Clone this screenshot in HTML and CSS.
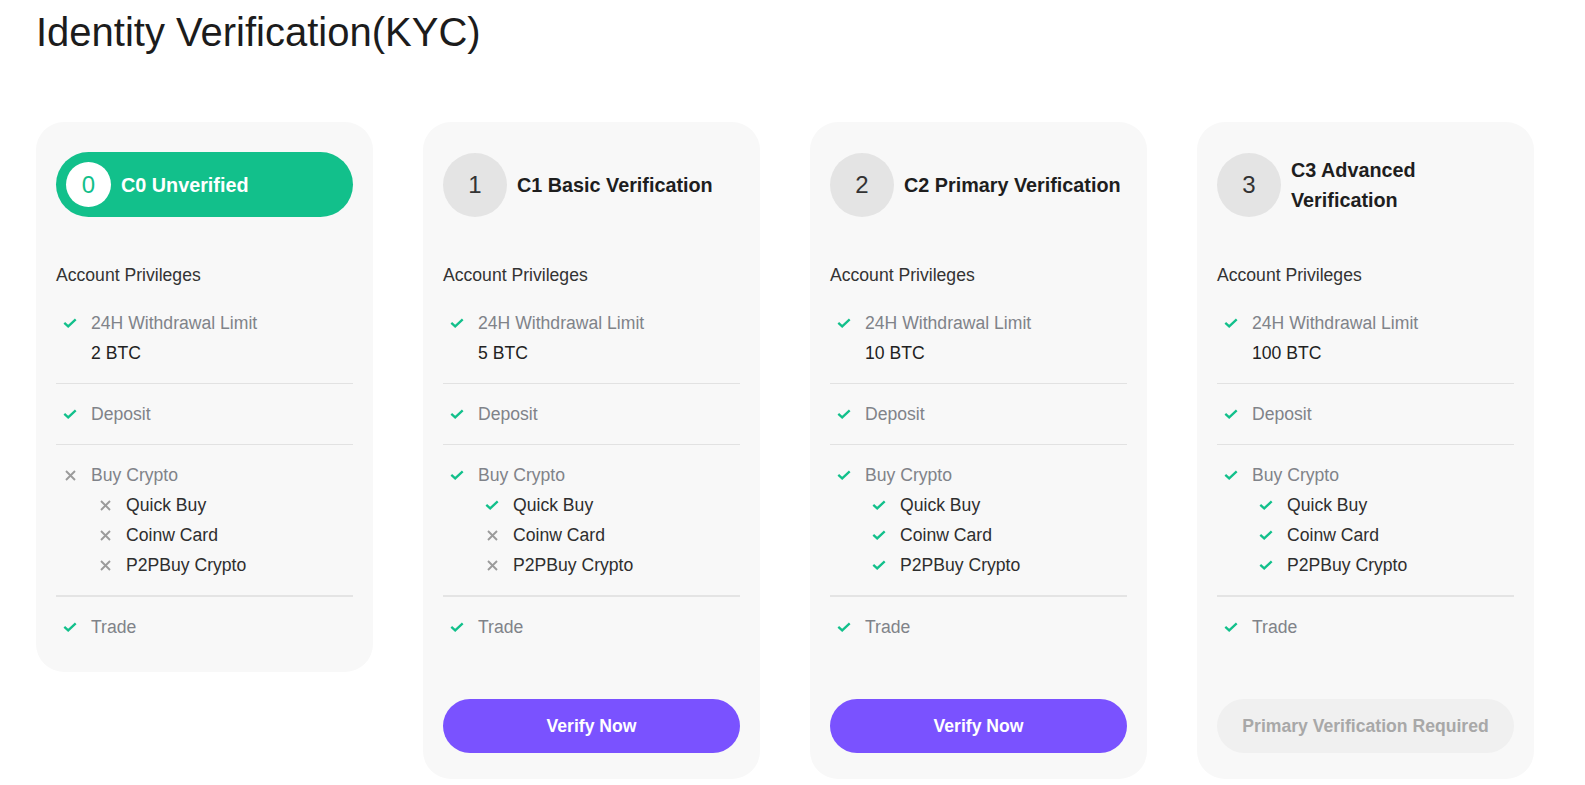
FILE: index.html
```html
<!DOCTYPE html>
<html lang="en">
<head>
<meta charset="utf-8">
<title>Identity Verification(KYC)</title>
<link rel="stylesheet" href="styles.css">
</head>
<body>
<main class="page">
  <h1 class="page-title">Identity Verification(KYC)</h1>
  <div class="levels">

    <section class="card">
      <div class="level level--current">
        <span class="level-num">0</span>
        <span class="level-name">C0 Unverified</span>
      </div>
      <div class="priv-title">Account Privileges</div>
      <div class="priv-list">
        <div class="priv-group">
          <div class="priv"><span class="ic"><svg class="check" viewBox="0 0 14 10" width="14" height="10"><path d="M1.3 4.8 L5.2 8.4 L12.7 1.4"/></svg></span><span class="label">24H Withdrawal Limit</span></div>
          <div class="value">2 BTC</div>
        </div>
        <div class="priv-group">
          <div class="priv"><span class="ic"><svg class="check" viewBox="0 0 14 10" width="14" height="10"><path d="M1.3 4.8 L5.2 8.4 L12.7 1.4"/></svg></span><span class="label">Deposit</span></div>
        </div>
        <div class="priv-group priv-group--subs">
          <div class="priv"><span class="ic"><svg class="cross" viewBox="0 0 11 11" width="11" height="11"><path d="M1 1 L10 10 M10 1 L1 10"/></svg></span><span class="label">Buy Crypto</span></div>
          <div class="priv priv--sub"><span class="ic"><svg class="cross" viewBox="0 0 11 11" width="11" height="11"><path d="M1 1 L10 10 M10 1 L1 10"/></svg></span><span class="sub-label">Quick Buy</span></div>
          <div class="priv priv--sub"><span class="ic"><svg class="cross" viewBox="0 0 11 11" width="11" height="11"><path d="M1 1 L10 10 M10 1 L1 10"/></svg></span><span class="sub-label">Coinw Card</span></div>
          <div class="priv priv--sub"><span class="ic"><svg class="cross" viewBox="0 0 11 11" width="11" height="11"><path d="M1 1 L10 10 M10 1 L1 10"/></svg></span><span class="sub-label">P2PBuy Crypto</span></div>
        </div>
        <div class="priv-group">
          <div class="priv"><span class="ic"><svg class="check" viewBox="0 0 14 10" width="14" height="10"><path d="M1.3 4.8 L5.2 8.4 L12.7 1.4"/></svg></span><span class="label">Trade</span></div>
        </div>
      </div>
    </section>

    <section class="card card--action">
      <div class="level">
        <span class="level-num">1</span>
        <span class="level-name">C1 Basic Verification</span>
      </div>
      <div class="priv-title">Account Privileges</div>
      <div class="priv-list">
        <div class="priv-group">
          <div class="priv"><span class="ic"><svg class="check" viewBox="0 0 14 10" width="14" height="10"><path d="M1.3 4.8 L5.2 8.4 L12.7 1.4"/></svg></span><span class="label">24H Withdrawal Limit</span></div>
          <div class="value">5 BTC</div>
        </div>
        <div class="priv-group">
          <div class="priv"><span class="ic"><svg class="check" viewBox="0 0 14 10" width="14" height="10"><path d="M1.3 4.8 L5.2 8.4 L12.7 1.4"/></svg></span><span class="label">Deposit</span></div>
        </div>
        <div class="priv-group priv-group--subs">
          <div class="priv"><span class="ic"><svg class="check" viewBox="0 0 14 10" width="14" height="10"><path d="M1.3 4.8 L5.2 8.4 L12.7 1.4"/></svg></span><span class="label">Buy Crypto</span></div>
          <div class="priv priv--sub"><span class="ic"><svg class="check" viewBox="0 0 14 10" width="14" height="10"><path d="M1.3 4.8 L5.2 8.4 L12.7 1.4"/></svg></span><span class="sub-label">Quick Buy</span></div>
          <div class="priv priv--sub"><span class="ic"><svg class="cross" viewBox="0 0 11 11" width="11" height="11"><path d="M1 1 L10 10 M10 1 L1 10"/></svg></span><span class="sub-label">Coinw Card</span></div>
          <div class="priv priv--sub"><span class="ic"><svg class="cross" viewBox="0 0 11 11" width="11" height="11"><path d="M1 1 L10 10 M10 1 L1 10"/></svg></span><span class="sub-label">P2PBuy Crypto</span></div>
        </div>
        <div class="priv-group">
          <div class="priv"><span class="ic"><svg class="check" viewBox="0 0 14 10" width="14" height="10"><path d="M1.3 4.8 L5.2 8.4 L12.7 1.4"/></svg></span><span class="label">Trade</span></div>
        </div>
      </div>
      <button class="btn btn--primary" type="button">Verify Now</button>
    </section>

    <section class="card card--action">
      <div class="level">
        <span class="level-num">2</span>
        <span class="level-name">C2 Primary Verification</span>
      </div>
      <div class="priv-title">Account Privileges</div>
      <div class="priv-list">
        <div class="priv-group">
          <div class="priv"><span class="ic"><svg class="check" viewBox="0 0 14 10" width="14" height="10"><path d="M1.3 4.8 L5.2 8.4 L12.7 1.4"/></svg></span><span class="label">24H Withdrawal Limit</span></div>
          <div class="value">10 BTC</div>
        </div>
        <div class="priv-group">
          <div class="priv"><span class="ic"><svg class="check" viewBox="0 0 14 10" width="14" height="10"><path d="M1.3 4.8 L5.2 8.4 L12.7 1.4"/></svg></span><span class="label">Deposit</span></div>
        </div>
        <div class="priv-group priv-group--subs">
          <div class="priv"><span class="ic"><svg class="check" viewBox="0 0 14 10" width="14" height="10"><path d="M1.3 4.8 L5.2 8.4 L12.7 1.4"/></svg></span><span class="label">Buy Crypto</span></div>
          <div class="priv priv--sub"><span class="ic"><svg class="check" viewBox="0 0 14 10" width="14" height="10"><path d="M1.3 4.8 L5.2 8.4 L12.7 1.4"/></svg></span><span class="sub-label">Quick Buy</span></div>
          <div class="priv priv--sub"><span class="ic"><svg class="check" viewBox="0 0 14 10" width="14" height="10"><path d="M1.3 4.8 L5.2 8.4 L12.7 1.4"/></svg></span><span class="sub-label">Coinw Card</span></div>
          <div class="priv priv--sub"><span class="ic"><svg class="check" viewBox="0 0 14 10" width="14" height="10"><path d="M1.3 4.8 L5.2 8.4 L12.7 1.4"/></svg></span><span class="sub-label">P2PBuy Crypto</span></div>
        </div>
        <div class="priv-group">
          <div class="priv"><span class="ic"><svg class="check" viewBox="0 0 14 10" width="14" height="10"><path d="M1.3 4.8 L5.2 8.4 L12.7 1.4"/></svg></span><span class="label">Trade</span></div>
        </div>
      </div>
      <button class="btn btn--primary" type="button">Verify Now</button>
    </section>

    <section class="card card--action">
      <div class="level">
        <span class="level-num">3</span>
        <span class="level-name">C3 Advanced Verification</span>
      </div>
      <div class="priv-title">Account Privileges</div>
      <div class="priv-list">
        <div class="priv-group">
          <div class="priv"><span class="ic"><svg class="check" viewBox="0 0 14 10" width="14" height="10"><path d="M1.3 4.8 L5.2 8.4 L12.7 1.4"/></svg></span><span class="label">24H Withdrawal Limit</span></div>
          <div class="value">100 BTC</div>
        </div>
        <div class="priv-group">
          <div class="priv"><span class="ic"><svg class="check" viewBox="0 0 14 10" width="14" height="10"><path d="M1.3 4.8 L5.2 8.4 L12.7 1.4"/></svg></span><span class="label">Deposit</span></div>
        </div>
        <div class="priv-group priv-group--subs">
          <div class="priv"><span class="ic"><svg class="check" viewBox="0 0 14 10" width="14" height="10"><path d="M1.3 4.8 L5.2 8.4 L12.7 1.4"/></svg></span><span class="label">Buy Crypto</span></div>
          <div class="priv priv--sub"><span class="ic"><svg class="check" viewBox="0 0 14 10" width="14" height="10"><path d="M1.3 4.8 L5.2 8.4 L12.7 1.4"/></svg></span><span class="sub-label">Quick Buy</span></div>
          <div class="priv priv--sub"><span class="ic"><svg class="check" viewBox="0 0 14 10" width="14" height="10"><path d="M1.3 4.8 L5.2 8.4 L12.7 1.4"/></svg></span><span class="sub-label">Coinw Card</span></div>
          <div class="priv priv--sub"><span class="ic"><svg class="check" viewBox="0 0 14 10" width="14" height="10"><path d="M1.3 4.8 L5.2 8.4 L12.7 1.4"/></svg></span><span class="sub-label">P2PBuy Crypto</span></div>
        </div>
        <div class="priv-group">
          <div class="priv"><span class="ic"><svg class="check" viewBox="0 0 14 10" width="14" height="10"><path d="M1.3 4.8 L5.2 8.4 L12.7 1.4"/></svg></span><span class="label">Trade</span></div>
        </div>
      </div>
      <button class="btn btn--disabled" type="button" disabled>Primary Verification Required</button>
    </section>

  </div>
</main>
</body>
</html>
```
FILE: styles.css
```css
* { box-sizing: border-box; }

html, body {
  margin: 0;
  padding: 0;
  background: #ffffff;
}

body {
  font-family: "Liberation Sans", Arial, sans-serif;
  color: #333333;
}

.page {
  padding: 9px 36px 0 36px;
}

.page-title {
  margin: 0;
  font-size: 40px;
  line-height: 46px;
  font-weight: 400;
  color: #1c1c1c;
}

.levels {
  display: flex;
  align-items: flex-start;
  gap: 50px;
  margin-top: 67px;
}

.card {
  width: 337px;
  flex: 0 0 337px;
  background: #f8f8f8;
  border-radius: 28px;
  padding: 30px 20px 15px 20px;
  display: flex;
  flex-direction: column;
}

.card--action {
  padding-bottom: 26px;
}

.level {
  display: flex;
  align-items: center;
  gap: 10px;
  min-height: 65px;
}

.level--current {
  background: #12c08b;
  border-radius: 33px;
  padding: 0 10px;
}

.level-num {
  flex: 0 0 64px;
  width: 64px;
  height: 64px;
  border-radius: 50%;
  background: #e4e4e4;
  color: #333333;
  font-size: 24px;
  display: flex;
  align-items: center;
  justify-content: center;
}

.level--current .level-num {
  flex: 0 0 45px;
  width: 45px;
  height: 45px;
  background: #ffffff;
  color: #12c08b;
}

.level-name {
  font-size: 19.8px;
  line-height: 30px;
  font-weight: 700;
  color: #1e1e1e;
}

.level--current .level-name {
  color: #ffffff;
}

.priv-title {
  margin-top: 43px;
  font-size: 17.6px;
  line-height: 30px;
  color: #333333;
}

.priv-list {
  margin-top: 3px;
}

.priv-group {
  padding: 15px 0;
  border-bottom: 1px solid #e2e2e2;
}

.priv-group--subs {
  border-bottom-width: 2px;
  border-bottom-color: #e4e4e4;
}

.priv-group:last-child {
  border-bottom: none;
}

.priv {
  display: flex;
  align-items: center;
  height: 30px;
  font-size: 17.6px;
  gap: 13px;
}

.priv--sub {
  padding-left: 35px;
}

.ic {
  flex: 0 0 16px;
  width: 16px;
  height: 30px;
  margin-left: 6px;
  display: flex;
  align-items: center;
  justify-content: center;
}

.check path {
  fill: none;
  stroke: #12c08b;
  stroke-width: 2.3;
  stroke-linecap: butt;
  stroke-linejoin: miter;
}

.cross path {
  fill: none;
  stroke: #9b9b9b;
  stroke-width: 1.9;
}

.label {
  color: #808389;
}

.sub-label {
  color: #2e2e2e;
}

.value {
  padding-left: 35px;
  font-size: 17.6px;
  line-height: 30px;
  color: #222222;
}

.btn {
  margin-top: 42px;
  width: 100%;
  height: 54px;
  border: none;
  border-radius: 27px;
  font-family: "Liberation Sans", Arial, sans-serif;
  font-size: 17.6px;
  font-weight: 700;
  cursor: pointer;
}

.btn--primary {
  background: #7a52ff;
  color: #ffffff;
}

.btn--disabled {
  background: #f0f0f0;
  color: #a8a8a8;
  cursor: not-allowed;
}
```
